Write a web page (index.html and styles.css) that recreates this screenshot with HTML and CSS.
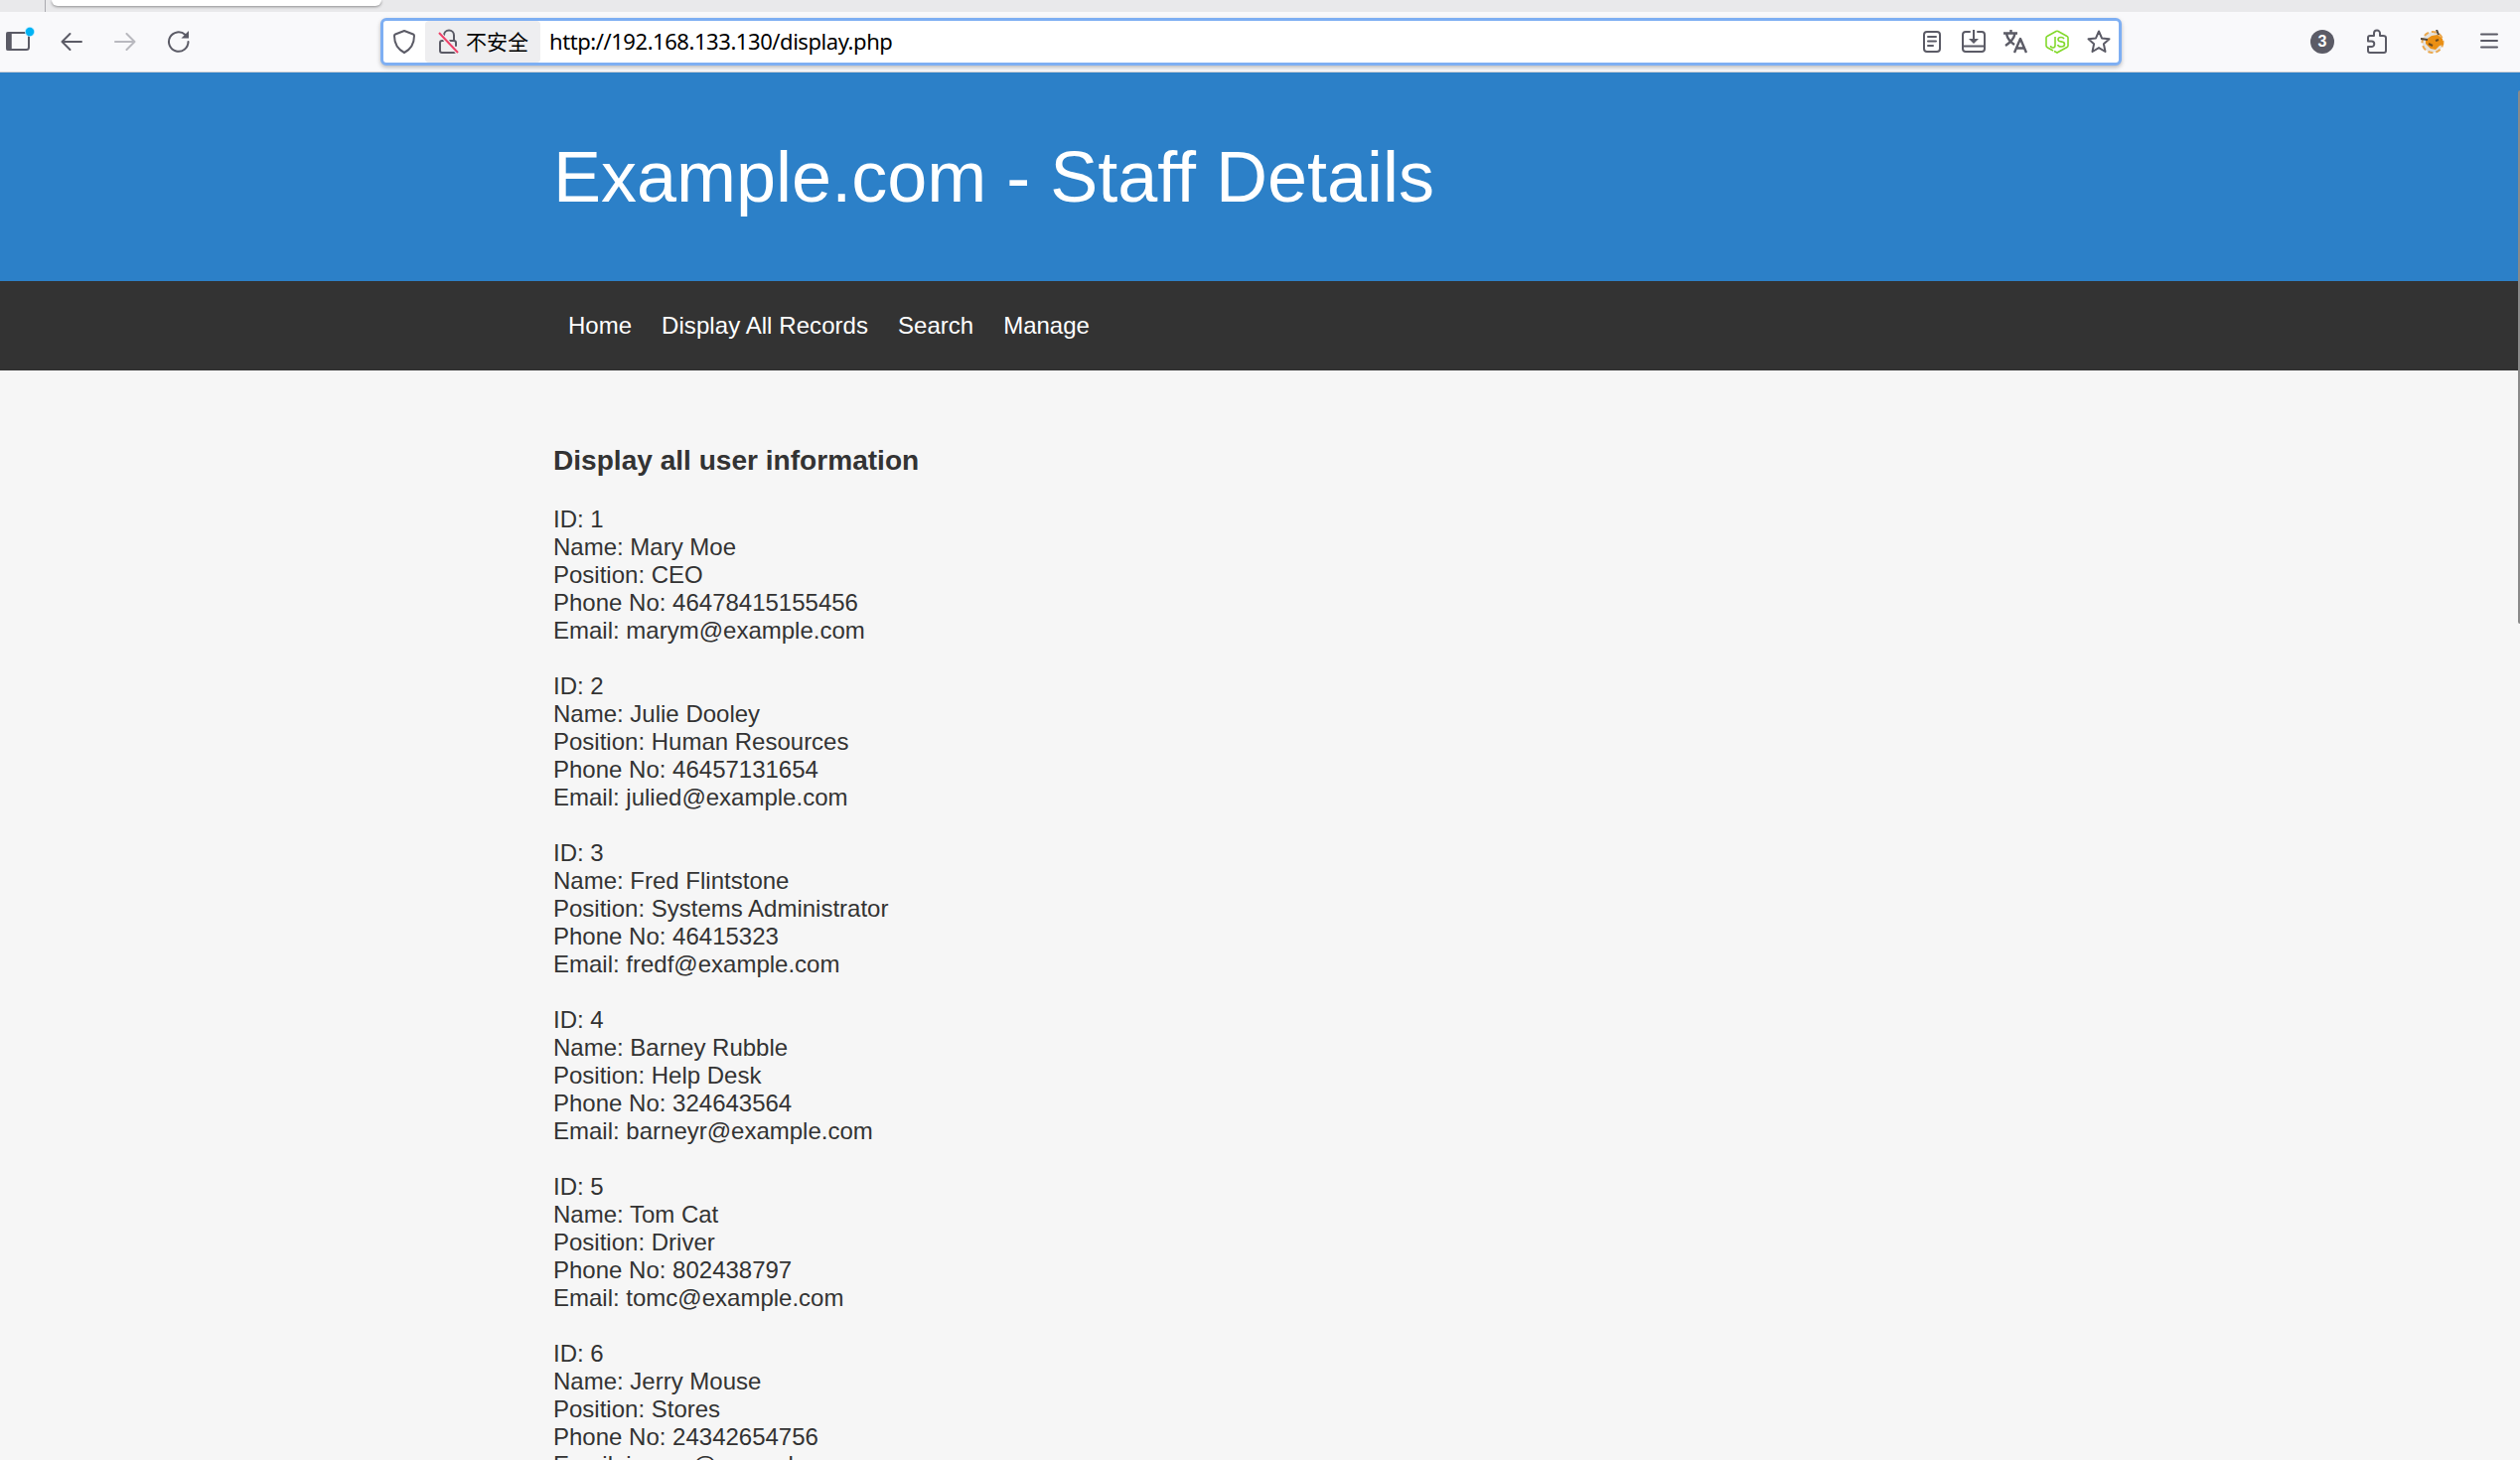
FILE: index.html
```html
<!DOCTYPE html>
<html lang="en">
<head>
<meta charset="utf-8">
<title>Example.com - Staff Details</title>
<link rel="stylesheet" href="styles.css">
</head>
<body>
<div class="tabstrip"><div class="tab-edge"></div><div class="tab"></div></div>
<div class="toolbar">
  <div class="nav-buttons">
    <svg class="sidebar-icon" width="32" height="28" viewBox="0 0 32 28"><rect x="2" y="7" width="22" height="17" rx="2.500" fill="none" stroke="#5b5b66" stroke-width="2"/><path d="M2 7h4v17H2z" fill="#5b5b66" stroke="#5b5b66" stroke-width="1.500" stroke-linejoin="round"/><circle cx="25" cy="6" r="5" fill="#b5e8ff"/><circle cx="25" cy="6" r="4.200" fill="#00b3f4"/></svg>
    <svg class="back-icon" width="22" height="20" viewBox="0 0 22 20"><path d="M21 10H1.500M9.500 2L1.500 10l8 8" class="line"/></svg>
    <svg class="forward-icon" width="22" height="20" viewBox="0 0 22 20"><path d="M1 10h19.500M12.500 2l8 8-8 8" class="line"/></svg>
    <svg class="reload-icon" width="24" height="24" viewBox="0 0 24 24"><path d="M21.500 12A9.750 9.750 0 1 1 18.500 5" class="line"/><path d="M22 1v7.500h-7.500z" fill="#5b5b66"/></svg>
  </div>
  <div class="urlbar">
    <svg class="shield-icon" width="24" height="26" viewBox="0 0 24 26"><path d="M12 2l9 3.500q1 .5 1 1.500c0 8-2.500 13-10 17C4.500 20 2 15 2 7q0-1 1-1.500z" class="line"/></svg>
    <div class="identity">
      <svg width="22" height="26" viewBox="0 0 22 26"><path d="M6 9V6.500a5 5 0 0 1 10 0V12M5 12H4q-2 0-2 2v8q0 2 2 2h12q2 0 2-2M12 12h4q2 0 2 2v3" class="line"/><path d="M1 4l19 20" stroke="#eeeef0" stroke-width="4"/><path d="M1 4l19 20" stroke="#ee4068" stroke-width="2"/></svg>
      <span>不安全</span>
    </div>
    <span class="url">http://192.168.133.130/display.php</span>
    <div class="actions">
      <svg width="24" height="24" viewBox="0 0 24 24"><rect x="4" y="2" width="16" height="20" rx="3" class="line"/><path d="M8 7h8M8 11.500h8M8 16h5" class="line"/></svg>
      <svg width="24" height="24" viewBox="0 0 24 24"><path d="M8 2H4Q1 2 1 5v14q0 3 3 3h16q3 0 3-3V5q0-3-3-3h-4M1 16.500h22M12 0v12" class="line"/><path d="M7 9h10l-5 5z" fill="#5b5b66"/></svg>
      <svg width="24" height="24" viewBox="0 0 24 24"><path d="M0 3.500h14M7.500 0v3.500M3 4c1 5 5 9 8 11M11.500 4c-1 5-5 9-9.500 12M11 23l6-14 6 14M13 18.500h8" class="line bold"/></svg>
      <svg width="24" height="24" viewBox="0 0 24 24"><path d="M8 21l-5.500-3q-1.500-1-1.500-2V8q0-1 1-1.500L11 1.500q1-.5 2 0L22 6.500q1 .5 1 1.500v8q0 1-1 1.500L12 23l-3-1.500" class="js"/><path d="M10 7v8.500q0 2.500-2 2.500-2.500 0-2.500-2M19 9q-1-1.500-3-1.500-3 0-3 2.200 0 1.800 3 2.200 3.500.4 3.500 2.600 0 2.500-3.300 2.500-3 0-3.700-2" class="js"/></svg>
      <svg width="24" height="24" viewBox="0 0 24 24"><path d="M12 1.500l3 6.900 7.500.8-5.600 5 1.600 7.800-6.500-3.900L5.500 22l1.600-7.800-5.600-5 7.500-.8z" class="line"/></svg>
    </div>
  </div>
  <div class="extras">
    <span class="badge">3</span>
    <svg class="puzzle-icon" width="22" height="26" viewBox="0 0 22 26"><path d="M2 9.500V9q0-2 2-2h4V4.500a3 3 0 0 1 6 0V7h3q3 0 3 2v13q0 2-2 2H4q-2 0-2-2v-4h3.500a2.500 2.500 0 0 0 0-5.500H2z" class="line"/></svg>
    <svg class="fox-icon" width="24" height="24" viewBox="0 0 24 24"><circle cx="12" cy="12.500" r="10.500" fill="#e4e2de" stroke="#eba94f" stroke-width="2" stroke-dasharray="5 3"/><path d="M5 10l6-4 6-1 5 4 1 6-4 1-4 4-5-1-5-5z" fill="#ea8f13"/><path d="M0 9l7 1M16 0l2 5" stroke="#51473c" stroke-width="2" fill="none"/><path d="M8 14l4 2M15 11l3-1" stroke="#6b4a1e" stroke-width="2"/></svg>
    <svg class="menu-icon" width="18" height="18" viewBox="0 0 18 18"><path d="M1 2.500h16M1 9h16M1 15.500h16" class="line"/></svg>
  </div>
</div>
<div class="page">
  <header><div class="container"><h1>Example.com - Staff Details</h1></div></header>
  <nav><ul class="container"><li>Home</li><li class="current">Display All Records</li><li>Search</li><li>Manage</li></ul></nav>
  <main class="container">
    <h3>Display all user information</h3>
    <p>ID: 1<br>Name: Mary Moe<br>Position: CEO<br>Phone No: 46478415155456<br>Email: marym@example.com</p>
    <p>ID: 2<br>Name: Julie Dooley<br>Position: Human Resources<br>Phone No: 46457131654<br>Email: julied@example.com</p>
    <p>ID: 3<br>Name: Fred Flintstone<br>Position: Systems Administrator<br>Phone No: 46415323<br>Email: fredf@example.com</p>
    <p>ID: 4<br>Name: Barney Rubble<br>Position: Help Desk<br>Phone No: 324643564<br>Email: barneyr@example.com</p>
    <p>ID: 5<br>Name: Tom Cat<br>Position: Driver<br>Phone No: 802438797<br>Email: tomc@example.com</p>
    <p>ID: 6<br>Name: Jerry Mouse<br>Position: Stores<br>Phone No: 24342654756<br>Email: jerrym@example.com</p>
  </main>
  <div class="scrollbar"></div>
</div>
</body>
</html>
```
FILE: styles.css
```css
* { box-sizing: border-box; }
body {
  margin: 0;
  height: 1470px;
  overflow: hidden;
  display: flex;
  flex-direction: column;
  background: #f6f6f6;
  color: #333;
  font: 24px/28px "Liberation Sans", Arial, sans-serif;
}
svg { display: block; flex: none; }
.line { fill: none; stroke: #5b5b66; stroke-width: 2; stroke-linecap: round; stroke-linejoin: round; }
.bold { stroke-width: 2.4; stroke-linecap: butt; }
.js { fill: none; stroke: #83d92c; stroke-width: 1.6; }

.tabstrip { flex: none; height: 12px; display: flex; background: #e9e9eb; }
.tab-edge { width: 46px; border-right: 1px solid #aaaab0; }
.tab { width: 332px; height: 6px; margin-left: 6px; background: #fff; border-radius: 0 0 6px 6px; box-shadow: 0 1px 3px rgba(0, 0, 0, .4); }

.toolbar { flex: none; height: 61px; display: flex; align-items: flex-start; background: #f9f9fb; border-bottom: 1px solid #d2d2d6; }
.nav-buttons { width: 383px; display: flex; padding-left: 5px; }
.sidebar-icon { margin-top: 14px; }
.back-icon { margin: 20px 0 0 24px; }
.forward-icon { margin: 20px 0 0 32px; opacity: .4; }
.reload-icon { margin: 18px 0 0 31px; }

.urlbar {
  width: 1753px;
  height: 48px;
  margin-top: 6px;
  padding-left: 9px;
  display: flex;
  align-items: center;
  background: #fff;
  border: 3px solid #7eaff3;
  border-radius: 6px;
  box-shadow: 0 2px 4px rgba(0, 0, 0, .25);
}
.identity {
  width: 116px;
  height: 42px;
  margin-left: 9px;
  padding-left: 13px;
  display: flex;
  align-items: center;
  gap: 6px;
  background: #eeeef0;
  border-radius: 4px;
  color: #000;
  font: 21px/40px "Noto Sans CJK SC", sans-serif;
}
.identity span { height: 42px; }
.url { margin-left: 9px; color: #000; font: 22px/40px "Noto Sans", sans-serif; height: 42px; letter-spacing: -.44px; white-space: nowrap; }
.actions { margin-left: auto; padding-right: 8px; display: flex; gap: 18px; }

.extras { flex: 1; display: flex; }
.badge { width: 24px; height: 24px; margin: 18px 0 0 190px; border-radius: 50%; background: #5b5b66; color: #fff; font: bold 16px/24px "Liberation Sans", sans-serif; text-align: center; }
.puzzle-icon { margin: 17px 0 0 32px; }
.fox-icon { margin: 18px 0 0 33px; }
.menu-icon { margin: 20px 0 0 36px; }

.page { position: relative; flex: 1; min-height: 0; overflow: hidden; }
.container { width: 1423px; margin: 0 auto; }
header { height: 210px; padding-top: 64px; background: #2c80c8; color: #fff; }
h1 { margin: 0; font-size: 72px; line-height: 82px; font-weight: 400; }
nav { height: 90px; padding-top: 31px; background: #333; color: #fff; }
ul { padding: 0; list-style: none; display: flex; }
li { padding: 0 15px; }
.current { letter-spacing: .07px; }
main { padding-top: 75px; }
h3 { margin: 0 0 29px; font-size: 28.08px; line-height: 32px; }
p { margin: 0 0 28px; }
.scrollbar { position: absolute; right: 0; top: 18px; width: 2px; height: 537px; background: #8a8a8a; border-radius: 2px 0 0 2px; }
```
